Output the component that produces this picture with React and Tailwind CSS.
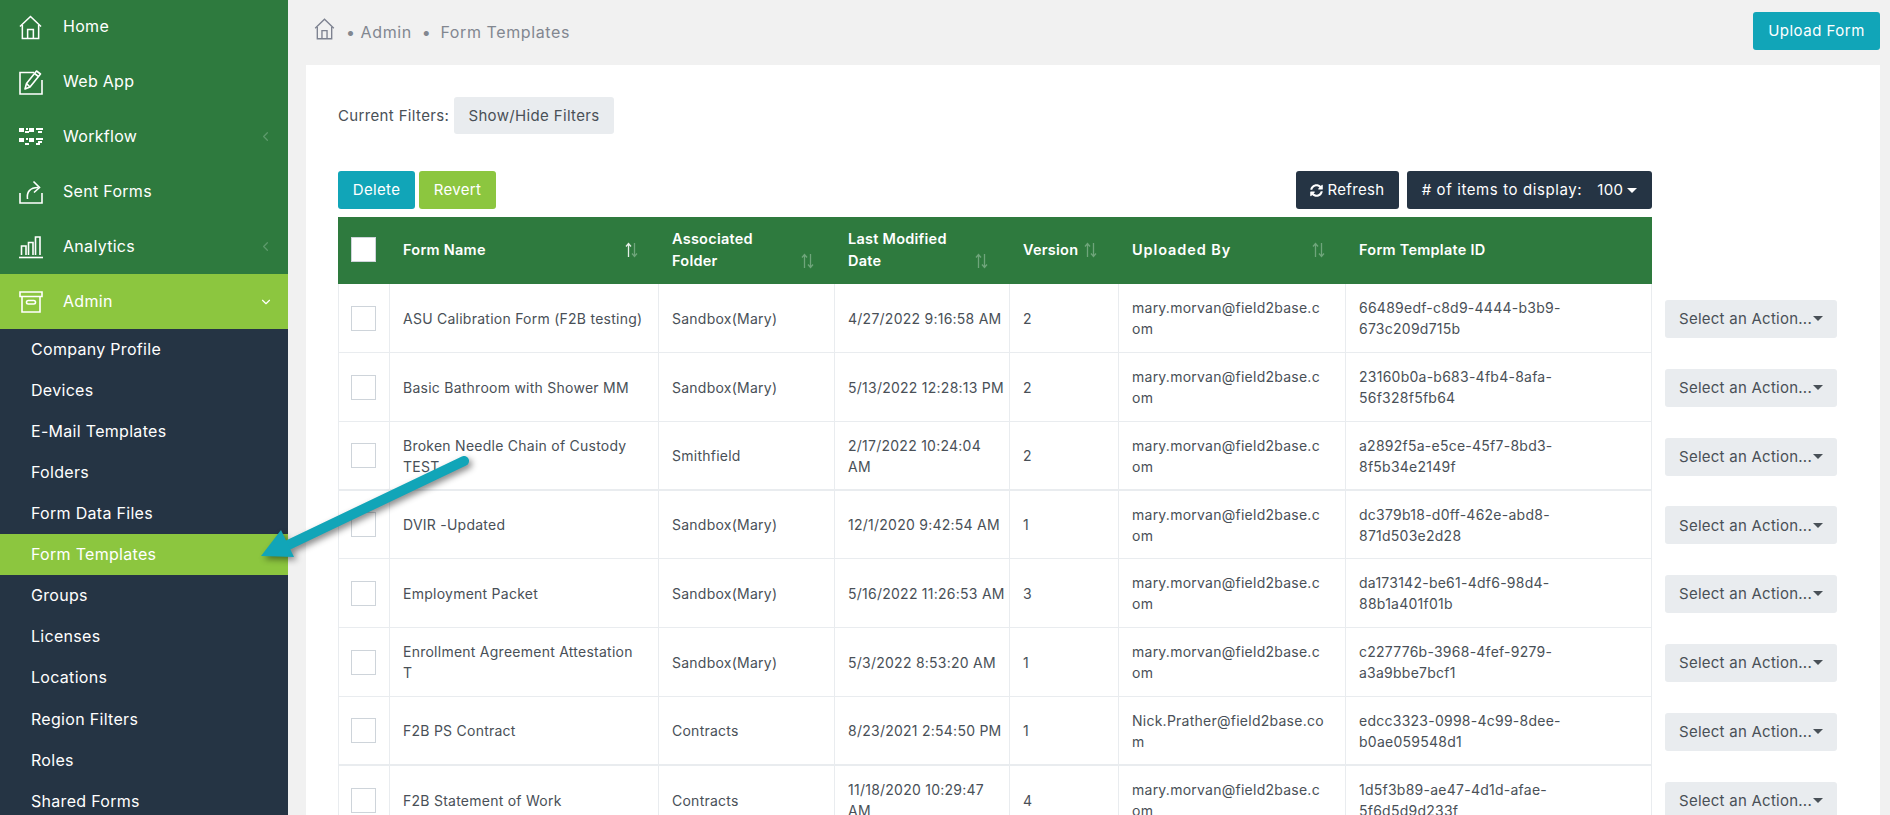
import React from "react";
import { ChevronLeft, ChevronDown } from "lucide-react";
import { FaSyncAlt } from "react-icons/fa";

const font = { fontFamily: "Inter, 'Open Sans', sans-serif" };

const HomeIcon = ({ className }) => (
  <svg viewBox="0 0 24 26" className={className} fill="none" stroke="currentColor" strokeWidth="1.6">
    <path d="M1 12 12 1.5 23 12" strokeLinejoin="miter" />
    <path d="M3.5 10.5V24.5H20.5V10.5" />
    <path d="M9 24.5V15H15V24.5" />
  </svg>
);
const EditIcon = ({ className }) => (
  <svg viewBox="0 0 24 26" className={className} fill="none" stroke="currentColor" strokeWidth="1.6">
    <path d="M15 3.5H1V25H23V11" />
    <path d="M6 20 7.5 14.5 17.5 2 21.5 5 11 18Z" strokeLinejoin="round" />
    <path d="M15.5 4.5 19.5 7.5M7.5 14.5 11 18" />
  </svg>
);
const FlowIcon = ({ className }) => (
  <svg viewBox="0 0 24 20" className={className} fill="currentColor">
    <rect x="0" y="1" width="5" height="4" /><rect x="7" y="1" width="2" height="2" /><rect x="10" y="1" width="5" height="4" /><rect x="17" y="1" width="7" height="2" /><rect x="19" y="4" width="4" height="2" /><rect x="6" y="4" width="4" height="2" />
    <rect x="0" y="11" width="5" height="4" /><rect x="7" y="11" width="2" height="2" /><rect x="10" y="11" width="5" height="4" /><rect x="17" y="11" width="7" height="2" /><rect x="19" y="14" width="4" height="2" /><rect x="6" y="16" width="4" height="2" /><rect x="17" y="16" width="4" height="2" />
  </svg>
);
const ShareIcon = ({ className }) => (
  <svg viewBox="0 0 24 24" className={className} fill="none" stroke="currentColor" strokeWidth="1.6">
    <path d="M1 13V23H23V13" />
    <path d="M8.5 19C7.5 12 11 7.5 19 7.5" />
    <path d="M14.5 1.5 20.5 7.5 15 12.5" />
  </svg>
);
const ChartIcon = ({ className }) => (
  <svg viewBox="0 0 24 24" className={className} fill="none" stroke="currentColor" strokeWidth="1.6">
    <path d="M0 22.5H24" />
    <path d="M2.5 20V11H7V20M9.5 20V7.5H14V20M16.5 20V2H21V20" />
  </svg>
);
const ArchiveIcon = ({ className }) => (
  <svg viewBox="0 0 24 22" className={className} fill="none" stroke="currentColor" strokeWidth="1.6">
    <path d="M1 1H23V5.5H1Z" />
    <path d="M3 5.5V21H21V5.5" />
    <rect x="7.5" y="9.5" width="9" height="3.5" rx="1.7" />
  </svg>
);

const SortIcon = ({ active }) => (
  <svg viewBox="0 0 13 16" className="w-[13px] h-[16px] shrink-0 mb-[3px]" fill="none" strokeWidth="1.3">
    <path d="M3.5 15V2M1 4.5 3.5 1.5 6 4.5" stroke={active ? "#e6efe8" : "#6fa57b"} />
    <path d="M9.5 1V14M7 11.5 9.5 14.5 12 11.5" stroke="#6fa57b" />
  </svg>
);

const mainNav = [
  { label: "Home", Icon: HomeIcon, w: "w-[23px] h-[25px]", h: "h-[54px]" },
  { label: "Web App", Icon: EditIcon, w: "w-[24px] h-[26px]", h: "h-[55px]" },
  { label: "Workflow", Icon: FlowIcon, w: "w-[24px] h-[20px]", h: "h-[55px]", chev: true },
  { label: "Sent Forms", Icon: ShareIcon, w: "w-[24px] h-[24px]", h: "h-[55px]" },
  { label: "Analytics", Icon: ChartIcon, w: "w-[24px] h-[24px]", h: "h-[55px]", chev: true },
];
const subNav = ["Company Profile", "Devices", "E-Mail Templates", "Folders", "Form Data Files", "Form Templates", "Groups", "Licenses", "Locations", "Region Filters", "Roles", "Shared Forms"];

const m = ["mary.morvan@field2base.c", "om"];
const rows = [
  { name: ["ASU Calibration Form (F2B testing)"], folder: "Sandbox(Mary)", date: ["4/27/2022 9:16:58 AM"], v: "2", by: m, id: ["66489edf-c8d9-4444-b3b9-", "673c209d715b"], h: "h-[69px]" },
  { name: ["Basic Bathroom with Shower MM"], folder: "Sandbox(Mary)", date: ["5/13/2022 12:28:13 PM"], v: "2", by: m, id: ["23160b0a-b683-4fb4-8afa-", "56f328f5fb64"], h: "h-[69px]" },
  { name: ["Broken Needle Chain of Custody", "TEST"], folder: "Smithfield", date: ["2/17/2022 10:24:04", "AM"], v: "2", by: m, id: ["a2892f5a-e5ce-45f7-8bd3-", "8f5b34e2149f"], thick: true, h: "h-[69px]" },
  { name: ["DVIR -Updated"], folder: "Sandbox(Mary)", date: ["12/1/2020 9:42:54 AM"], v: "1", by: m, id: ["dc379b18-d0ff-462e-abd8-", "871d503e2d28"], h: "h-[68px]" },
  { name: ["Employment Packet"], folder: "Sandbox(Mary)", date: ["5/16/2022 11:26:53 AM"], v: "3", by: m, id: ["da173142-be61-4df6-98d4-", "88b1a401f01b"], h: "h-[69px]" },
  { name: ["Enrollment Agreement Attestation", "T"], folder: "Sandbox(Mary)", date: ["5/3/2022 8:53:20 AM"], v: "1", by: m, id: ["c227776b-3968-4fef-9279-", "a3a9bbe7bcf1"], h: "h-[69px]" },
  { name: ["F2B PS Contract"], folder: "Contracts", date: ["8/23/2021 2:54:50 PM"], v: "1", by: ["Nick.Prather@field2base.co", "m"], id: ["edcc3323-0998-4c99-8dee-", "b0ae059548d1"], thick: true, h: "h-[69px]" },
  { name: ["F2B Statement of Work"], folder: "Contracts", date: ["11/18/2020 10:29:47", "AM"], v: "4", by: m, id: ["1d5f3b89-ae47-4d1d-afae-", "5f6d5d9d233f"], h: "h-[69px]" },
];

const Lines = ({ lines }) => lines.map((l, i) => <div key={i} className="whitespace-nowrap">{l}</div>);

const Td = ({ children, thick }) => (
  <td className={`pl-[13px] pr-[8px] align-middle border-r border-[#e9ecef] ${thick ? "border-b-2" : "border-b"}`}>{children}</td>
);

export default function App() {
  return (
    <div style={font} className="relative flex h-[815px] w-[1890px] overflow-hidden bg-[#f1f1f1] text-[14px] tracking-[0.25px]">
      <aside className="w-[288px] shrink-0 bg-[#253444] text-white text-[16px] tracking-[0.3px]">
        {mainNav.map(({ label, Icon, w, h, chev }) => (
          <div key={label} className={`${h} flex items-center bg-[#2e7a3e] pl-[19px] pr-[15px]`}>
            <span className="w-[44px] shrink-0"><Icon className={w} /></span>
            <span className="flex-1 pb-[2px]">{label}</span>
            {chev && <ChevronLeft className="w-[15px] h-[15px] text-[#5d9a6b]" />}
          </div>
        ))}
        <div className="h-[55px] flex items-center bg-[#8cc63f] pl-[19px] pr-[15px]">
          <span className="w-[44px] shrink-0"><ArchiveIcon className="w-[24px] h-[22px]" /></span>
          <span className="flex-1 pb-[2px]">Admin</span>
          <ChevronDown className="w-[14px] h-[14px]" />
        </div>
        {subNav.map((s, i) => (
          <div key={s} className={`${i < 6 ? "h-[41px]" : "h-[41.2px]"} flex items-center pl-[31px] pb-[1px] ${s === "Form Templates" ? "bg-[#8cc63f]" : ""}`}>{s}</div>
        ))}
      </aside>

      <main className="flex-1 min-w-0 pl-[18px] pr-[10px]">
        <div className="h-[65px] flex items-start justify-between">
          <div className="flex items-center h-[64px] pl-[8px] text-[16px] tracking-[0.6px] text-[#828790]">
            <HomeIcon className="w-[21px] h-[22px] mr-[11px] -mt-[6px] text-[#7d8290]" />
            <span className="mr-[5px]">•</span>
            <span className="mr-[10px]">Admin</span>
            <span className="mr-[9px]">•</span>
            <span>Form Templates</span>
          </div>
          <button className="mt-[12px] w-[127px] h-[38px] rounded-[3px] bg-[#11a5b8] text-white text-[15px] tracking-[0.5px]">Upload Form</button>
        </div>

        <div className="h-[750px] bg-white pl-[32px] pt-[32px]">
          <div className="flex items-center h-[37px] text-[#495057] text-[15px] tracking-[0.35px]">
            <span className="w-[116px] pt-[1px]">Current Filters:</span>
            <button className="w-[160px] h-[37px] pt-[1px] bg-[#e9ecef] rounded-[3px] text-[#495057]">Show/Hide Filters</button>
          </div>

          <div className="mt-[37px] w-[1314px] flex justify-between h-[38px] text-[15px] tracking-[0.35px]">
            <div className="flex gap-[4px]">
              <button className="w-[77px] rounded-[3px] bg-[#11a5b8] text-white">Delete</button>
              <button className="w-[77px] rounded-[3px] bg-[#8cc63f] text-white">Revert</button>
            </div>
            <div className="flex gap-[8px]">
              <button className="w-[103px] flex items-center justify-center gap-[4px] rounded-[3px] bg-[#253444] text-white"><FaSyncAlt className="w-[13px] h-[13px]" />Refresh</button>
              <button className="w-[245px] flex items-center justify-center rounded-[3px] bg-[#253444] text-white">
                <span className="mr-[15px] tracking-[0.6px]"># of items to display:</span>
                <span>100</span>
                <span className="ml-[4px] border-x-[5px] border-x-transparent border-t-[5px] border-t-white" />
              </button>
            </div>
          </div>

          <table className="mt-[8px] table-fixed border-separate border-spacing-0 w-[1499px] text-[#495057] leading-[21px]">
            <colgroup>
              <col className="w-[52px]" /><col className="w-[269px]" /><col className="w-[176px]" /><col className="w-[175px]" /><col className="w-[109px]" /><col className="w-[227px]" /><col className="w-[306px]" /><col />
            </colgroup>
            <thead>
              <tr className="h-[67px]">
                <th className="bg-[#2e7a3e] pl-[13px] pr-0 text-left align-middle"><div className="w-[25px] h-[25px] mb-[3px] bg-white border border-[#ced4da]" /></th>
                <th className="bg-[#2e7a3e] p-0" colSpan={6}>
                  <div className="flex h-[67px] items-center pb-[2px] text-[14.5px] leading-[22px] font-semibold text-white text-left">
                    <div className="w-[269px] pl-[13px] pr-[21px] flex items-end justify-between"><div>Form Name</div><SortIcon active /></div>
                    <div className="w-[176px] pl-[13px] pr-[21px] flex items-end justify-between"><div>Associated<br />Folder</div><SortIcon /></div>
                    <div className="w-[175px] pl-[13px] pr-[22px] flex items-end justify-between"><div>Last Modified<br />Date</div><SortIcon /></div>
                    <div className="w-[109px] pl-[13px] pr-[22px] flex items-end justify-between"><div>Version</div><SortIcon /></div>
                    <div className="w-[227px] pl-[13px] pr-[21px] flex items-end justify-between"><div className="tracking-[0.9px]">Uploaded By</div><SortIcon /></div>
                    <div className="w-[306px] pl-[13px]">Form Template ID</div>
                  </div>
                </th>
                <th />
              </tr>
            </thead>
            <tbody>
              {rows.map((r, i) => (
                <tr key={i} className={r.h}>
                  <td className={`pl-[13px] align-middle border-l border-r border-[#e9ecef] ${r.thick ? "border-b-2" : "border-b"}`}>
                    <div className="w-[25px] h-[25px] -ml-[1px] bg-white border border-[#ced4da]" />
                  </td>
                  <Td thick={r.thick}><Lines lines={r.name} /></Td>
                  <Td thick={r.thick}>{r.folder}</Td>
                  <Td thick={r.thick}><Lines lines={r.date} /></Td>
                  <Td thick={r.thick}>{r.v}</Td>
                  <Td thick={r.thick}><Lines lines={r.by} /></Td>
                  <Td thick={r.thick}><Lines lines={r.id} /></Td>
                  <td className="pl-[13px] align-middle">
                    <button className="w-[172px] h-[38px] flex items-center justify-center rounded-[3px] bg-[#e9ecef] text-[15px] text-[#495057]">
                      <span>Select an Action...</span>
                      <span className="ml-[1px] border-x-[5px] border-x-transparent border-t-[5px] border-t-[#495057]" />
                    </button>
                  </td>
                </tr>
              ))}
            </tbody>
          </table>
        </div>
      </main>

      <svg className="absolute left-0 top-0 w-[1890px] h-[815px] pointer-events-none drop-shadow-[3px_3px_3px_rgba(0,0,0,0.45)]" viewBox="0 0 1890 815">
        <path d="M464 461 L286 546" stroke="#11a5b8" strokeWidth="10" strokeLinecap="round" fill="none" />
        <path d="M261 556 L281 530 L294 557 Z" fill="#11a5b8" />
      </svg>
    </div>
  );
}
